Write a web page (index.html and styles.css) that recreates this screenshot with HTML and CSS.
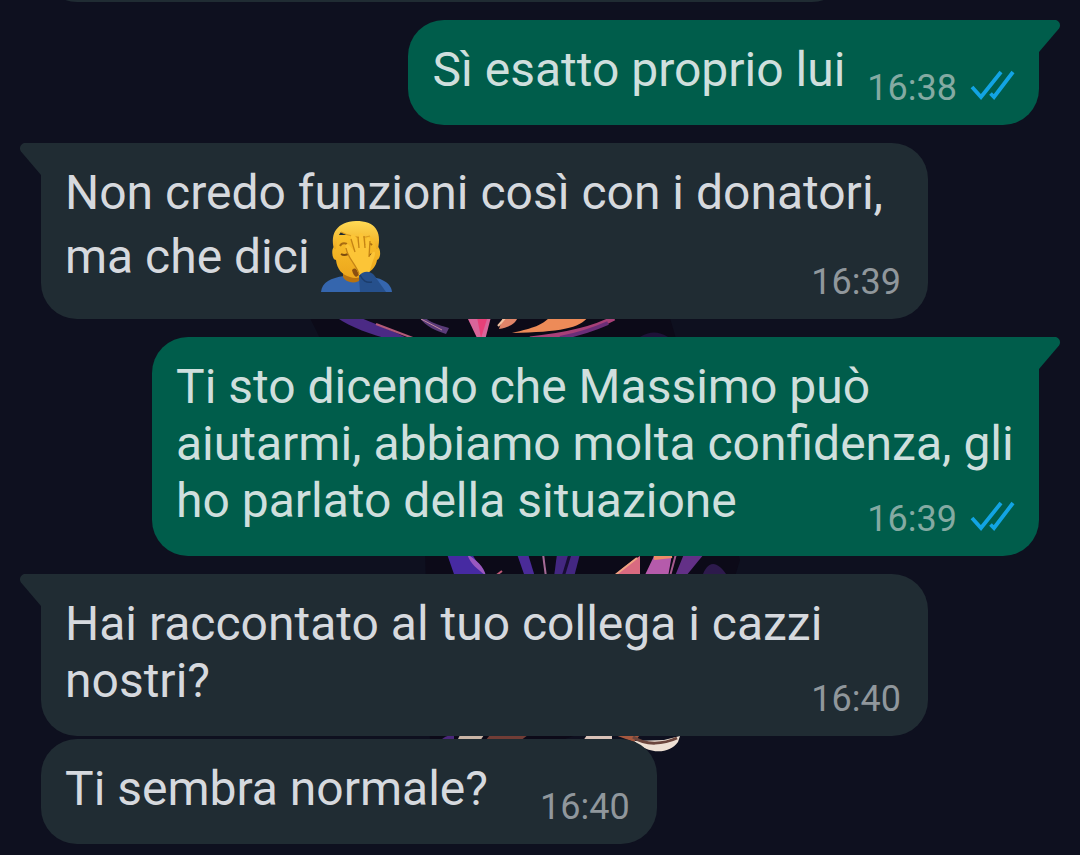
FILE: index.html
```html
<!DOCTYPE html>
<html lang="it">
<head>
<meta charset="utf-8">
<meta name="viewport" content="width=device-width, initial-scale=1">
<title>Chat</title>
<link rel="stylesheet" href="styles.css">
</head>
<body>
<svg class="defs" aria-hidden="true">
  <symbol id="tail" viewBox="0 0 22 33"><path d="M0 0H16C20 0 22.500 5 20 8.500L0 32Z"/></symbol>
  <symbol id="ticks" viewBox="0 0 46 30"><path d="M3 17L12 27L32 2M21.500 23.500L25 27L44 2" fill="none" stroke="#12a4e3" stroke-width="3.800" stroke-linecap="butt" stroke-linejoin="miter"/></symbol>
</svg>
<main class="chat">
  <svg class="wallpaper" viewBox="300 310 440 450" aria-hidden="true">
    <path d="M310 318H670L740 560L700 690L480 770L430 740L425 550Z" fill="#0c0a18"/>
    <path d="M336 317C352 328 370 334 392 340H412C392 331 372 322 358 317Z" fill="#4b2a85"/>
    <path d="M376 324L418 340" stroke="#b35a78" stroke-width="2"/>
    <path d="M419 317C426 327 437 331 446 334L449 328C438 325 430 322 424 317Z" fill="#5a3b78"/>
    <path d="M421 319L442 330" stroke="#c58aa0" stroke-width="1"/>
    <path d="M467 317H491L485 340H478Z" fill="#d9659a"/>
    <path d="M477 317L481 338L487 319Z" fill="#e83f78"/>
    <path d="M503 317H518C515 325 508 327 499 329Z" fill="#e08468"/>
    <path d="M505 318L498 326" stroke="#f0c0a0" stroke-width="2"/>
    <path d="M550 317H588C580 328 560 332 512 333C534 328 542 325 550 317Z" fill="#ed8b58"/>
    <path d="M614 318C594 329 568 335 530 339" fill="none" stroke="#a84078" stroke-width="5"/>
    <path d="M608 323C590 331 575 335 560 338" fill="none" stroke="#6b2e78" stroke-width="4"/>
    <path d="M640 337Q654 328 668 337" fill="#1e1238"/>
    <path d="M447 554H472L486 577H455Z" fill="#462aa2"/>
    <path d="M467 554C476 560 484 566 486 576C477 568 471 565 467 554Z" fill="#9a58c0"/>
    <path d="M494 577L502 571" stroke="#c05a78" stroke-width="2"/>
    <path d="M517 554H528L535 577H525Z" fill="#4a2b98"/>
    <path d="M543 554L546 577" stroke="#a46a96" stroke-width="2"/>
    <path d="M557 554H580L574 577H554Z" fill="#432781"/>
    <path d="M570 554L563 577" stroke="#180d34" stroke-width="3"/>
    <path d="M640 556V577H613C622 568 630 562 640 556Z" fill="#d96a80"/>
    <path d="M637 558L614 576" stroke="#f0a282" stroke-width="2"/>
    <path d="M655 554H672L668 577H644Z" fill="#b55bab"/>
    <path d="M654 558L672 556" stroke="#ed8c68" stroke-width="4"/>
    <path d="M676 554L670 576" stroke="#a45a8c" stroke-width="2"/>
    <path d="M684 554H704L686 576H675Z" fill="#633087"/>
    <path d="M702 577C706 564 715 556 728 577Z" fill="#2d1a4c"/>
    <path d="M440 741Q447 734 454 736V741Z" fill="#4a277a"/>
    <path d="M457 741L460 735H484L480 741Z" fill="#c9b5a6"/>
    <path d="M485 741L490 735H528L520 741Z" fill="#713d36"/>
    <path d="M583 741L587 735H612V741Z" fill="#d9c2b8"/>
    <path d="M615 735H640L634 742Z" fill="#a5583f"/>
    <path d="M634 741C646 753 668 756 678 742L680 736L664 740Z" fill="#eee0d4"/>
    <path d="M633 737C646 746 664 744 677 738" fill="none" stroke="#6c463d" stroke-width="3"/>
  </svg>

  <div class="bubble received previous"></div>

  <article class="bubble sent short first">
    <svg class="tail" aria-hidden="true"><use href="#tail"/></svg>
    <p class="text">Sì esatto proprio lui</p>
    <div class="meta"><time>16:38</time><svg class="ticks" role="img" aria-label="Letto"><use href="#ticks"/></svg></div>
  </article>

  <article class="bubble received long first">
    <svg class="tail" aria-hidden="true"><use href="#tail"/></svg>
    <p class="text">Non credo funzioni così con i donatori, ma che dici
      <svg class="emoji" viewBox="0 0 71 71" role="img" aria-label="Uomo con la mano sul viso">
        <defs>
          <linearGradient id="skin" x1="0" y1="0" x2="0" y2="1"><stop offset="0" stop-color="#f9c02c"/><stop offset="1" stop-color="#eca61c"/></linearGradient>
          <linearGradient id="hair" x1="0" y1="0" x2="0" y2="1"><stop offset="0" stop-color="#ffda55"/><stop offset="1" stop-color="#efab20"/></linearGradient>
        </defs>
        <path d="M0 71C1 61 10 57 23 55H43C59 56 70 61 71 71Z" fill="#3566ae"/>
        <path d="M22 52V56C25 62 36 64 41 57V46H25Z" fill="#b8720f"/>
        <path d="M13 26C10 28 11 39 15 39C16 48 21 54 29 56C34 58 40 57 45 53C52 49 55 45 56 39C60 38 60 28 57 26V14H14Z" fill="url(#skin)"/>
        <path d="M13 28C9 12 16 1 35 0C54 0 61 10 57 28L55 28C54 20 52 17 49 15C39 18 27 15 20 11C16 15 16 22 15 28Z" fill="url(#hair)"/>
        <path d="M20 11C27 15 39 18 49 15" fill="none" stroke="#d99b20" stroke-width="1.200"/>
        <path d="M19 25Q21 21 26 23M45 24Q48 21 51 24" fill="none" stroke="#a86c12" stroke-width="2"/>
        <path d="M20 33Q23 35 27 33M46 34Q49 35 51 33" fill="none" stroke="#7c4c0e" stroke-width="2"/>
        <path d="M31 49C34 46 37 48 38 54L35 56Q32 54 31 49Z" fill="#8b4f10"/>
        <path d="M25 27C23 23 27 22 29 25L34 31L30 17C29 13 33 12 35 16L38 27L38 15C38 11 42 11 42 15L44 27L45 19C46 15 50 16 49 20L48 36L51 32C54 29 55 32 53 37C50 44 50 49 47 53L38 54C35 44 28 40 25 27Z" fill="#fcc537"/>
        <path d="M25 27C27 38 35 43 38 53M34 31L30 18M38 27L37 16M44 27L43 15M48 36L49 20" fill="none" stroke="#c58415" stroke-width="1.300"/>
        <path d="M39 71L38 55C42 49 50 50 53 54L65 71Z" fill="#26508c"/>
        <path d="M39 54C42 60 45 62 51 61" fill="none" stroke="#1c3d6c" stroke-width="1.500"/>
      </svg></p>
    <div class="meta"><time>16:39</time></div>
  </article>

  <article class="bubble sent long first">
    <svg class="tail" aria-hidden="true"><use href="#tail"/></svg>
    <p class="text">Ti sto dicendo che Massimo può aiutarmi, abbiamo molta confidenza, gli ho parlato della situazione</p>
    <div class="meta"><time>16:39</time><svg class="ticks" role="img" aria-label="Letto"><use href="#ticks"/></svg></div>
  </article>

  <article class="bubble received long first">
    <svg class="tail" aria-hidden="true"><use href="#tail"/></svg>
    <p class="text">Hai raccontato al tuo collega i cazzi nostri?</p>
    <div class="meta"><time>16:40</time></div>
  </article>

  <article class="bubble received short">
    <p class="text">Ti sembra normale?</p>
    <div class="meta"><time>16:40</time></div>
  </article>
</main>
</body>
</html>
```

FILE: styles.css
```css
* {
  box-sizing: border-box;
}

body {
  margin: 0;
  background: #0e101f;
  font-family: Roboto, "Liberation Sans", sans-serif;
}

.defs {
  position: absolute;
  width: 0;
  height: 0;
}

.chat {
  position: relative;
  display: flex;
  flex-direction: column;
  justify-content: flex-end;
  height: 100vh;
  padding: 0 41px 11px;
  overflow: hidden;
}

.wallpaper {
  position: absolute;
  left: 300px;
  bottom: 95px;
  width: 440px;
  height: 450px;
}

.bubble {
  position: relative;
  display: grid;
  flex: none;
  margin-top: 3px;
  padding: 21px 24px 0;
  border-radius: 36px;
}

.previous {
  width: 807px;
  height: 105px;
}

.first {
  margin-top: 18px;
}

.long {
  width: calc(100% - 111px);
}

.short {
  grid-template-columns: auto auto;
  column-gap: 22px;
}

.sent {
  align-self: flex-end;
  background: #005d4b;
  color: #cfdfdd;
}

.received {
  align-self: flex-start;
  padding-right: 27px;
  background: #202c33;
  color: #d6d9de;
}

.received.short {
  column-gap: 52px;
}

.sent.first {
  border-top-right-radius: 0;
}

.received.first {
  border-top-left-radius: 0;
}

.tail {
  position: absolute;
  top: 0;
  width: 22px;
  height: 33px;
}

.sent .tail {
  left: 100%;
  fill: #005d4b;
}

.received .tail {
  right: 100%;
  fill: #202c33;
  transform: scaleX(-1);
}

.text {
  margin: 0;
  padding-bottom: 27px;
  font-size: 48px;
  line-height: 57px;
}

.long .text,
.long .meta {
  grid-area: 1 / 1;
}

.emoji {
  width: 71px;
  height: 71px;
  vertical-align: -19px;
}

.meta {
  display: flex;
  align-items: center;
  align-self: end;
  justify-self: end;
  gap: 12px;
  margin-bottom: 16px;
  color: #90979c;
  font-size: 36px;
  line-height: 42px;
}

.sent .meta {
  color: #84aaa2;
}

.ticks {
  width: 46px;
  height: 30px;
  margin-bottom: 6px;
}
```
